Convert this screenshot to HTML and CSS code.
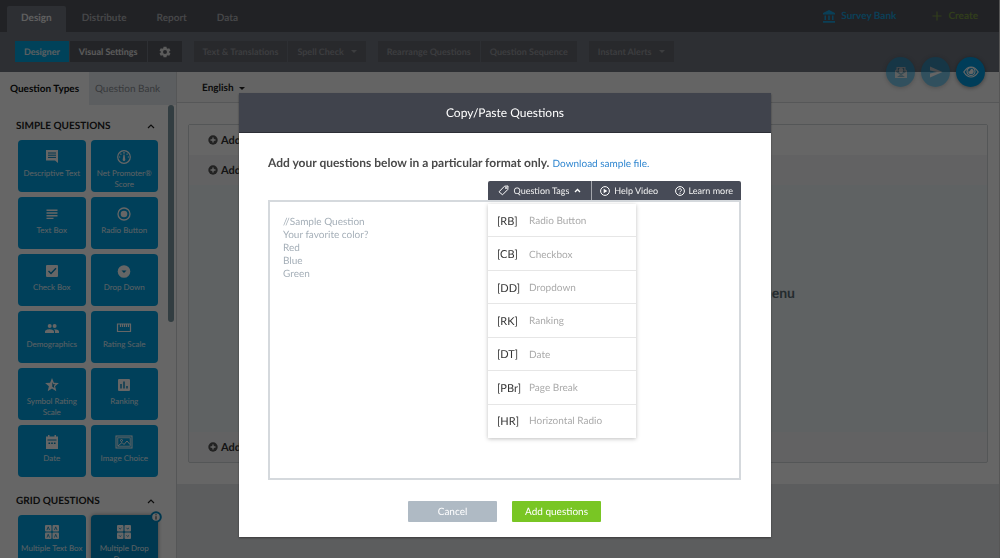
FILE: index.html
```html
<!DOCTYPE html>
<html lang="en">
<head>
<meta charset="utf-8">
<meta name="viewport" content="width=device-width, initial-scale=1">
<title>Copy/Paste Questions</title>
<link rel="stylesheet" href="styles.css">
</head>
<body>
<div class="app">
  <header class="topbar">
    <nav class="tabs">
      <a class="tab tab-active" href="#design">Design</a>
      <a class="tab" href="#distribute">Distribute</a>
      <a class="tab" href="#report">Report</a>
      <a class="tab" href="#data">Data</a>
    </nav>
    <div class="top-links">
      <a class="top-link bank" href="#bank">
        <svg width="12" height="13" viewBox="0 0 12 13" fill="currentColor"><path d="M6 0l6 3v1.500H0V3zM1.500 5.500H3v4.500H1.500zM5.200 5.500h1.600v4.500H5.200zM9 5.500h1.500v4.500H9zM0 11h12v1.700H0z"/></svg>
        Survey Bank</a>
      <a class="top-link create" href="#create">
        <svg width="10" height="10" viewBox="0 0 10 10" stroke="currentColor" stroke-width="1.200"><path d="M5 0.500v9M0.500 5h9"/></svg>
        Create</a>
    </div>
  </header>

  <div class="toolbar">
    <div class="group">
      <button class="tool tool-on">Designer</button>
      <button class="tool tool-lit">Visual Settings</button>
      <button class="tool tool-lit gear" aria-label="Settings">
        <svg width="12" height="12" viewBox="0 0 24 24" fill="currentColor"><path d="M20.400 13.200a9 9 0 0 0 0-2.400l2.500-2-2.500-4.300-3 1.200a9 9 0 0 0-2-1.200L15 1.300h-6l-.4 3.200a9 9 0 0 0-2 1.200l-3-1.200L1.100 8.800l2.500 2a9 9 0 0 0 0 2.400l-2.500 2 2.500 4.300 3-1.200a9 9 0 0 0 2 1.200l.4 3.200h6l.4-3.200a9 9 0 0 0 2-1.200l3 1.200 2.500-4.300zM12 16a4 4 0 1 1 0-8 4 4 0 0 1 0 8z"/></svg>
      </button>
    </div>
    <div class="group">
      <button class="tool">Text &amp; Translations</button>
      <button class="tool">Spell Check <span class="caret"></span></button>
    </div>
    <div class="group">
      <button class="tool">Rearrange Questions</button>
      <button class="tool">Question Sequence</button>
    </div>
    <div class="group">
      <button class="tool">Instant Alerts <span class="caret"></span></button>
    </div>
    <div class="fabs">
      <button class="fab fab-dim" aria-label="Invite">
        <svg width="14" height="14" viewBox="0 0 14 14"><path d="M1 5.500L2.500 4.300V2h9v2.300L13 5.500V13H1z" fill="#dfe6ea"/><path d="M2.500 6.500L7 9.500l4.500-3" fill="none" stroke="#1b7ba5" stroke-width="1.300"/><path d="M3.800 3h6.400v3.700L7 8.800 3.800 6.700z" fill="#1b7ba5"/><circle cx="7" cy="5.500" r="2.400" fill="#fff"/><path d="M3 12l2.500-1.800h3L11 12z" fill="#1b7ba5"/></svg>
      </button>
      <button class="fab fab-dim" aria-label="Send">
        <svg width="14" height="12" viewBox="0 0 14 12" fill="#fff"><path d="M1 0.500L13.500 6 1 11.500V7.500L8 6 1 4.500z"/></svg>
      </button>
      <button class="fab" aria-label="Preview">
        <svg width="16" height="12" viewBox="0 0 16 12" fill="none" stroke="#fff" stroke-width="1.200"><path d="M.8 6C3 2.500 5.300 1 8 1s5 1.500 7.200 5C13 9.500 10.700 11 8 11S3 9.500.8 6z"/><circle cx="8" cy="5.500" r="4"/><circle cx="8" cy="5.500" r="2.700" fill="#fff" stroke="none"/><path d="M5.700 5.300A2.300 2.300 0 0 1 7.600 3.400" stroke="#0086c0"/></svg>
      </button>
    </div>
  </div>

  <div class="workspace">
    <aside class="sidebar">
      <div class="side-tabs">
        <button class="side-tab side-tab-on">Question Types</button>
        <button class="side-tab">Question Bank</button>
      </div>
      <div class="side-body">
        <div class="side-list">
          <button class="section">SIMPLE QUESTIONS
            <svg width="8" height="5" viewBox="0 0 8 5" fill="none" stroke="#222" stroke-width="1.200"><path d="M1 4l3-3 3 3"/></svg>
          </button>
          <div class="tiles">
            <button class="tile"><svg class="ico" viewBox="0 0 16 14"><path d="M2 0h12v13l-3-2.500H2z" fill="#fff"/><path d="M4 3h8M4 5.200h8M4 7.400h8" stroke="#0089c4" fill="none"/></svg>Descriptive Text</button>
            <button class="tile"><svg class="ico" viewBox="0 0 16 14"><g fill="none" stroke="#fff" stroke-width="1.200"><circle cx="8" cy="7" r="6.300"/><path d="M8 2v1.700M4.500 3.700l.8 1M11.500 3.700l-.8 1M3 7h1.200M11.800 7H13"/></g><path d="M7.500 4.500h1l.8 5.200a1.300 1.300 0 1 1-2.600 0z" fill="#fff"/></svg>Net Promoter® Score</button>
            <button class="tile"><svg class="ico" viewBox="0 0 16 14"><path d="M2.500 3.300h11M2.500 6h11M2.500 8.700h11M2.500 11.400h7" stroke="#fff" stroke-width="1.400"/></svg>Text Box</button>
            <button class="tile"><svg class="ico" viewBox="0 0 16 14"><circle cx="8" cy="7" r="6" fill="none" stroke="#fff" stroke-width="1.300"/><circle cx="8" cy="7" r="3.300" fill="#fff"/></svg>Radio Button</button>
            <button class="tile"><svg class="ico" viewBox="0 0 16 14"><rect x="2" y="1" width="12" height="12" rx="1" fill="#fff"/><path d="M4.500 7l2.500 2.500L12 4.300" fill="none" stroke="#0089c4" stroke-width="1.400"/></svg>Check Box</button>
            <button class="tile"><svg class="ico" viewBox="0 0 16 14"><circle cx="8" cy="7.500" r="6.300" fill="#fff"/><path d="M5.500 6.500h5L8 9z" fill="#0089c4"/></svg>Drop Down</button>
            <button class="tile"><svg class="ico" viewBox="0 0 16 14"><g fill="#fff"><circle cx="5.700" cy="5" r="2"/><circle cx="10.600" cy="5" r="2"/><path d="M1 12V10.500C1 9 4 8.200 5.500 8.200S10 9 10 10.500V12zM11 12v-1.500c0-1-.4-1.600-1-2.200 2 0 5 .7 5 2.200V12z"/></g></svg>Demographics</button>
            <button class="tile"><svg class="ico" viewBox="0 0 16 14"><path d="M1.500 3h13v7.500h-13zM4.500 3v3M6.500 3v3M8.500 3v3M10.500 3v3M12.500 3v3" fill="none" stroke="#fff" stroke-width="1.200"/></svg>Rating Scale</button>
            <button class="tile"><svg class="ico" viewBox="0 0 16 14"><path d="M8 0l1.900 4.700 5 .4-3.800 3.200 1.200 4.900L8 10.500l-4.300 2.700 1.200-4.900L1.100 5.100l5-.4z" fill="#fff"/><path d="M8.300 4l1 2.200 2.200.2-1.700 1.400.6 2.200-2.100-1.300z" fill="#0089c4"/></svg>Symbol Rating Scale</button>
            <button class="tile"><svg class="ico" viewBox="0 0 16 14"><rect x="2" y="1" width="12" height="12" rx="1" fill="#fff"/><path d="M5 6v4.500M8 3.500v7M11 8v2.500" stroke="#0089c4" stroke-width="1.400"/></svg>Ranking</button>
            <button class="tile"><svg class="ico" viewBox="0 0 16 14"><path d="M2 1.500h2V0h1.500v1.500h5V0H12v1.500h2V14H2z" fill="#fff"/><path d="M3.500 5h9" stroke="#0089c4"/><path d="M4.500 8.200h7" stroke="#0089c4" stroke-width="1.600" stroke-dasharray="1.600 1.100"/></svg>Date</button>
            <button class="tile"><svg class="ico ico-wide" viewBox="0 0 18 14"><g fill="none" stroke="#fff"><rect x="1" y="1" width="16" height="12"/><rect x="2.800" y="2.800" width="12.400" height="8.400" stroke-width=".8"/><path d="M3 11l4-3.500 2 2L12 6l3 3.500"/><circle cx="6.500" cy="5.500" r="1"/></g></svg>Image Choice</button>
          </div>
          <button class="section section-next">GRID QUESTIONS
            <svg width="8" height="5" viewBox="0 0 8 5" fill="none" stroke="#222" stroke-width="1.200"><path d="M1 4l3-3 3 3"/></svg>
          </button>
          <div class="tiles">
            <button class="tile"><svg class="ico" viewBox="0 0 16 14"><g fill="#fff"><rect x="1" y="0" width="6.500" height="6.500" rx="1"/><rect x="8.500" y="0" width="6.500" height="6.500" rx="1"/><rect x="1" y="7.500" width="6.500" height="6.500" rx="1"/><rect x="8.500" y="7.500" width="6.500" height="6.500" rx="1"/></g><path d="M3 5l1.200-3.200L5.500 5M10.500 5l1.200-3.200L13 5M3 12.500l1.200-3.200 1.300 3.200M10.500 12.500l1.200-3.200 1.300 3.200" fill="none" stroke="#0089c4" stroke-width=".8"/></svg>Multiple Text Box</button>
            <button class="tile tile-hover"><svg class="ico" viewBox="0 0 16 14"><g fill="#fff"><rect x="1" y="0" width="6.500" height="6.500" rx="1"/><rect x="8.500" y="0" width="6.500" height="6.500" rx="1"/><rect x="1" y="7.500" width="6.500" height="6.500" rx="1"/><rect x="8.500" y="7.500" width="6.500" height="6.500" rx="1"/></g><path d="M3 2.800l1.200 1.300 1.300-1.300M10.500 2.800l1.200 1.300L13 2.800M3 10.300l1.200 1.300 1.300-1.300M10.500 10.300l1.200 1.300 1.300-1.300" fill="none" stroke="#0089c4" stroke-width=".8"/></svg><span>Multiple Drop<br>Down</span><span class="info"><svg width="12" height="12" viewBox="0 0 12 12"><circle cx="6" cy="6" r="4.800" fill="#fff" stroke="#0089c4" stroke-width="2"/><path d="M6 3.200v1.100M6 5.200v3.400" stroke="#333"/></svg></span></button>
          </div>
        </div>
        <div class="thumb"></div>
      </div>
    </aside>

    <main class="main">
      <div class="language"><button class="lang">English <span class="caret"></span></button></div>
      <div class="canvas">
        <div class="card">
          <div class="add-row add-first"><button class="add"><svg width="10" height="10" viewBox="0 0 10 10"><circle cx="5" cy="5" r="4.700" fill="#555"/><path d="M5 2.500v5M2.500 5h5" stroke="#fff" stroke-width="1.300"/></svg>Add</button></div>
          <div class="add-row"><button class="add"><svg width="10" height="10" viewBox="0 0 10 10"><circle cx="5" cy="5" r="4.700" fill="#555"/><path d="M5 2.500v5M2.500 5h5" stroke="#fff" stroke-width="1.300"/></svg>Add</button></div>
          <div class="drop">menu</div>
          <div class="add-row"><button class="add"><svg width="10" height="10" viewBox="0 0 10 10"><circle cx="5" cy="5" r="4.700" fill="#555"/><path d="M5 2.500v5M2.500 5h5" stroke="#fff" stroke-width="1.300"/></svg>Add</button></div>
        </div>
      </div>
    </main>
  </div>
</div>

<div class="overlay">
  <section class="modal" role="dialog" aria-labelledby="modal-title">
    <h1 class="modal-title" id="modal-title">Copy/Paste Questions</h1>
    <div class="modal-body">
      <p class="intro"><label for="questions">Add your questions below in a particular format only.</label> <a href="#sample">Download sample file.</a></p>
      <div class="helpbar">
        <button class="help tags">
          <svg width="11" height="11" viewBox="0 0 11 11" fill="none" stroke="#fff"><path d="M6.500 1.200L10 1l-.2 3.500L4.500 9.800 1 6.800z" stroke-linejoin="round"/><circle cx="8" cy="3" r=".6"/></svg>
          Question Tags
          <svg width="7" height="5" viewBox="0 0 7 5" fill="none" stroke="#fff" stroke-width="1.300"><path d="M1 4l2.500-2.500L6 4"/></svg>
        </button>
        <a class="help" href="#video"><svg width="10" height="10" viewBox="0 0 10 10"><circle cx="5" cy="5" r="4.400" fill="none" stroke="#fff"/><path d="M3.700 2.700L7.300 5 3.700 7.300z" fill="#fff"/></svg>Help Video</a>
        <a class="help" href="#more"><svg width="10" height="10" viewBox="0 0 10 10" fill="none" stroke="#fff"><circle cx="5" cy="5" r="4.400"/><path d="M3.600 4.100a1.400 1.400 0 1 1 2 1.200c-.5.300-.6.500-.6 1M5 7v.9"/></svg>Learn more</a>
        <ul class="menu">
          <li><b>[RB]</b>Radio Button</li>
          <li><b>[CB]</b>Checkbox</li>
          <li><b>[DD]</b>Dropdown</li>
          <li><b>[RK]</b>Ranking</li>
          <li><b>[DT]</b>Date</li>
          <li><b>[PBr]</b>Page Break</li>
          <li><b>[HR]</b>Horizontal Radio</li>
        </ul>
      </div>
      <textarea class="input" id="questions" spellcheck="false">//Sample Question
Your favorite color?
Red
Blue
Green</textarea>
      <div class="actions">
        <button class="action cancel">Cancel</button>
        <button class="action submit">Add questions</button>
      </div>
    </div>
  </section>
</div>
</body>
</html>
```
FILE: styles.css
```css
* { box-sizing: border-box; }

body {
  margin: 0;
  font-family: Lato, "Open Sans", sans-serif;
  font-size: 11px;
  color: #222;
  background: #e4e6e9;
  text-rendering: geometricPrecision;
}

button {
  font: inherit;
  color: inherit;
  text-rendering: inherit;
  border: 0;
  padding: 0;
  background: none;
}

a { text-decoration: none; color: inherit; }

.app {
  height: 100vh;
  display: flex;
  flex-direction: column;
  overflow: hidden;
  border-right: 1px solid #d8d8d8;
}

/* Top navigation */
.topbar {
  display: flex;
  justify-content: space-between;
  height: 32px;
  padding: 6px 21px 0 7px;
  background: #53555c;
  flex: none;
}
.tabs { display: flex; gap: 2px; }
.tab {
  display: flex;
  align-items: center;
  padding: 0 14px 3px;
  font-size: 10px;
  font-weight: 700;
  color: #aeb0b5;
}
.tab-active {
  background: #70757f;
  color: #eee;
  border-radius: 2px 2px 0 0;
}
.top-links { display: flex; gap: 36px; padding-bottom: 6px; }
.top-link { display: flex; align-items: center; gap: 6px; font-size: 10px; font-weight: 700; }
.bank { color: #1b9fd9; }
.create { color: #7a9a45; }

/* Secondary toolbar */
.toolbar {
  display: flex;
  gap: 12px;
  align-items: center;
  height: 40px;
  padding: 0 15px 1px;
  background: #70757f;
  position: relative;
  flex: none;
}
.group { display: flex; gap: 1px; }
.tool {
  height: 21px;
  padding: 0 9px;
  background: #65676e;
  color: #96989e;
  font-size: 9px;
  font-weight: 700;
  display: flex;
  align-items: center;
  gap: 7px;
  white-space: nowrap;
}
.tool-on { background: #00a5e2; color: #e4eef2; }
.tool-lit { background: #595b62; color: #e4e4e4; }
.gear { padding: 0 11px; }
.caret {
  border: 3px solid transparent;
  border-top-color: currentColor;
  border-bottom: 0;
}

.fabs {
  position: absolute;
  right: 14px;
  bottom: -15px;
  z-index: 2;
  display: flex;
  gap: 6px;
}
.fab {
  width: 29px;
  height: 30px;
  border-radius: 50%;
  background: #009ade;
  display: grid;
  place-items: center;
  box-shadow: 0 1px 4px rgba(0, 0, 0, .4);
}
.fab-dim { opacity: .5; }

/* Workspace */
.workspace { display: flex; flex: 1; min-height: 0; }
.sidebar {
  width: 177px;
  flex: none;
  display: flex;
  flex-direction: column;
  background: #fff;
  border-right: 1px solid #d4d6d9;
}
.side-tabs { display: grid; grid-template-columns: 89px 1fr; height: 33px; flex: none; }
.side-tab { padding-right: 10px; background: #e6ebf1; color: #8b8f94; font-size: 10px; }
.side-tab-on { padding: 0; background: #fff; color: #111; font-weight: 700; }
.side-body { display: flex; flex: 1; min-height: 0; }
.side-list { width: 168px; overflow: hidden; padding: 13px 10px 0 16px; }
.thumb { width: 6px; height: 217px; border-radius: 3px; background: #7d98a2; flex: none; }

.section {
  display: flex;
  justify-content: space-between;
  align-items: center;
  width: 100%;
  height: 16px;
  padding: 0 3px 0 0;
  font-size: 10px;
  font-weight: 700;
}
.section-next { margin-top: 16px; }
.tiles {
  display: grid;
  grid-template-columns: 1fr 1fr;
  grid-auto-rows: 52px;
  gap: 5px;
  margin-top: 6px;
  padding-left: 2px;
}
.tile {
  display: flex;
  flex-direction: column;
  align-items: center;
  min-width: 0;
  padding-top: 10px;
  border-radius: 4px;
  background: #00a0e0;
  color: #e3f1f8;
  font-size: 8px;
  line-height: 11px;
  gap: 4px;
  position: relative;
}
.tile-hover { background: #008dc7; box-shadow: 0 0 4px rgba(0, 0, 0, .4); }
.ico { width: 16px; height: 14px; flex: none; }
.ico-wide { width: 18px; }
.info { position: absolute; top: -4px; right: -4px; width: 12px; height: 12px; display: flex; }

.main { flex: 1; min-width: 0; background: #e6e8eb; }
.language {
  height: 31px;
  padding: 2px 25px 0;
  display: flex;
  align-items: center;
  background: #fafafa;
  border-bottom: 1px solid #d8dadc;
}
.lang { display: flex; align-items: center; gap: 5px; font-size: 10px; font-weight: 700; color: #222; }
.canvas { padding: 21px 11px; background: #fff; }
.card { border: 1px solid #d2d6d9; border-radius: 2px; background: #f6f6f8; }
.add-row { height: 30px; display: flex; align-items: center; padding-left: 19px; }
.add-first { background: #fff; }
.add { display: flex; align-items: center; gap: 3px; font-size: 11px; font-weight: 700; color: #333; }
.drop {
  height: 247px;
  display: flex;
  align-items: center;
  justify-content: flex-end;
  padding: 0 192px 32px 0;
  background: #eef5f7;
  font-size: 14px;
  font-weight: 700;
  color: #5a6c75;
}

/* Dialog */
.overlay {
  position: fixed;
  inset: 0;
  z-index: 10;
  display: flex;
  justify-content: center;
  align-items: flex-start;
  padding: 93px 0 0 10px;
  background: rgba(0, 0, 0, .6);
}
.modal { width: 532px; max-width: 100%; background: #fff; box-shadow: 0 1px 2px rgba(0, 0, 0, .4); }
.modal-title {
  margin: 0;
  height: 40px;
  display: grid;
  place-items: center;
  background: #40434c;
  border-bottom: 1px solid #2c2e35;
  color: #fff;
  font-size: 12px;
  font-weight: 400;
}
.modal-body { padding: 22px 30px 15px 29px; }
.intro { margin: 0 0 9px; font-size: 12px; line-height: 16px; color: #4a4a4a; }
.intro label { font-weight: 700; }
.intro a { font-size: 10px; color: #2f86d0; }

.helpbar {
  position: relative;
  display: flex;
  width: 253px;
  height: 19px;
  margin-left: auto;
  background: #474b57;
  border-radius: 2px 2px 0 0;
  color: #f2f2f2;
}
.help { display: flex; align-items: center; justify-content: center; flex: 1; gap: 4px; font-size: 9px; white-space: nowrap; }
.tags { flex: 0 0 104px; gap: 5px; border-right: 1px solid #a4a6ac; }
.menu {
  position: absolute;
  top: 23px;
  left: 0;
  width: 148px;
  height: 234px;
  margin: 0;
  padding: 0;
  list-style: none;
  display: grid;
  grid-template-rows: repeat(7, 1fr);
  background: #fff;
  box-shadow: 0 1px 4px rgba(0, 0, 0, .25);
  font-size: 10px;
  color: #aaa;
}
.menu li { display: flex; align-items: center; padding: 2px 0 0 9px; border-bottom: 1px solid #e6e6e6; }
.menu li:last-child { border-bottom: 0; padding-top: 0; }
.menu b { width: 32px; font-size: 11px; font-weight: 400; color: #333; }

.input {
  display: block;
  width: 100%;
  height: 280px;
  padding: 14px 13px;
  border: 2px solid #d5d9dd;
  border-radius: 0;
  background: #fff;
  font: 10px/13px Lato, "Open Sans", sans-serif;
  text-rendering: inherit;
  color: #a5afb8;
  resize: none;
}
.actions { display: flex; justify-content: center; gap: 15px; margin-top: 21px; }
.action { width: 89px; height: 21px; border-radius: 1px; color: #fff; font-size: 10px; }
.cancel { background: #afbac4; }
.submit { background: #79c624; }
```
